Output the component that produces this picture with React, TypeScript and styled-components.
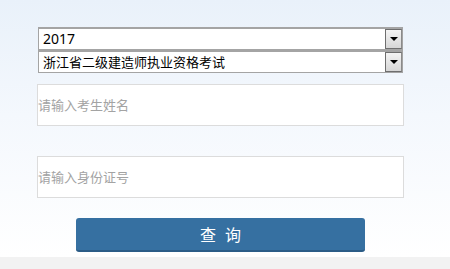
import React from 'react'
import styled, { createGlobalStyle } from 'styled-components'

const GlobalStyle = createGlobalStyle`
  html, body {
    margin: 0;
    padding: 0;
    width: 450px;
    height: 269px;
    overflow: hidden;
    font-family: "Noto Sans", "Noto Sans CJK SC", sans-serif;
  }
`

const Page = styled.div`
  display: flex;
  flex-direction: column;
  width: 450px;
  height: 269px;
`

const Main = styled.div`
  height: 257px;
  background: linear-gradient(to bottom, #e9f1fa 0%, #f4f8fd 45%, #ffffff 100%);
  box-sizing: border-box;
  padding: 27px 0 0 37px;
`

const Footer = styled.div`
  height: 12px;
  background: #f2f2f2;
`

const Form = styled.div`
  display: flex;
  flex-direction: column;
  width: 367px;
`

const SelectGroup = styled.div`
  display: flex;
  flex-direction: column;
  margin-left: 1px;
  width: 365px;
  margin-bottom: 11px;
`

const SelectBox = styled.div`
  display: flex;
  align-items: center;
  justify-content: space-between;
  height: 23px;
  box-sizing: border-box;
  border: 1px solid #a4a4a4;
  border-top-width: 2px;
  background: #fff;
  color: #000;
  padding-left: 4px;
`

const SelectLabel = styled.span<{ $size: number }>`
  font-size: ${(p) => p.$size}px;
  line-height: 1;
`

const ArrowButton = styled.span`
  display: flex;
  align-items: center;
  justify-content: center;
  width: 17px;
  height: 100%;
  box-sizing: border-box;
  border: 1px solid #6e6e6e;
  border-right-color: #8a8a8a;
  background: linear-gradient(to bottom, #f4f4f4 0%, #d6d6d6 100%);

  &::after {
    content: '';
    border-left: 4px solid transparent;
    border-right: 4px solid transparent;
    border-top: 4px solid #000;
  }
`

const TextInput = styled.input<{ $gap: number }>`
  display: block;
  width: 367px;
  height: 42px;
  box-sizing: border-box;
  border: 1px solid #dcdcdc;
  background: #fff;
  padding: 0;
  margin: 0 0 ${(p) => p.$gap}px 0;
  font-family: inherit;
  font-size: 13px;
  outline: none;

  &::placeholder {
    color: #a3a3a3;
  }
`

const SubmitButton = styled.button`
  align-self: flex-start;
  margin-left: 39px;
  width: 289px;
  height: 34px;
  border: none;
  border-bottom: 2px solid #2b5c86;
  border-radius: 3px;
  background: #3670a1;
  color: #fff;
  font-family: inherit;
  font-size: 16px;
  letter-spacing: 9px;
  text-indent: 9px;
  padding: 0;
  cursor: pointer;
`

export default function App() {
  return (
    <Page>
      <GlobalStyle />
      <Main>
        <Form>
          <SelectGroup>
            <SelectBox>
              <SelectLabel $size={14}>2017</SelectLabel>
              <ArrowButton />
            </SelectBox>
            <SelectBox>
              <SelectLabel $size={13}>浙江省二级建造师执业资格考试</SelectLabel>
              <ArrowButton />
            </SelectBox>
          </SelectGroup>
          <TextInput $gap={30} placeholder="请输入考生姓名" />
          <TextInput $gap={20} placeholder="请输入身份证号" />
          <SubmitButton>查询</SubmitButton>
        </Form>
      </Main>
      <Footer />
    </Page>
  )
}
